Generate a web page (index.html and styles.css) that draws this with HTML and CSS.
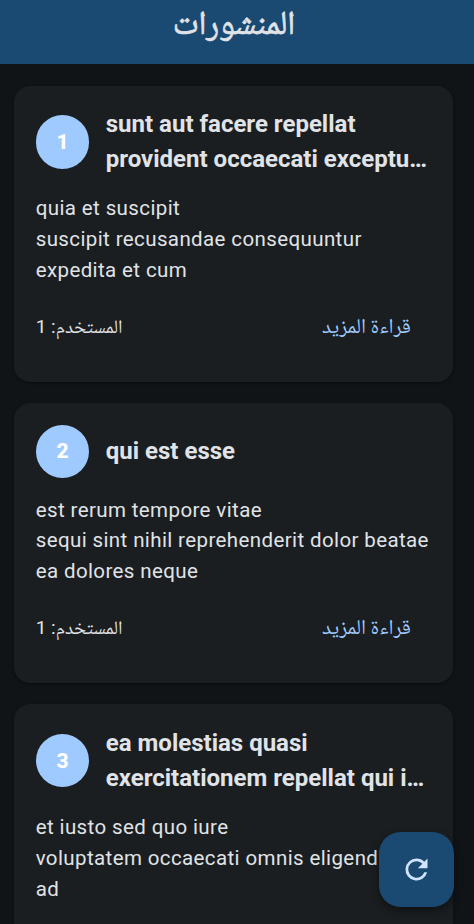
FILE: index.html
```html
<!DOCTYPE html>
<html lang="ar">
<head>
<meta charset="utf-8">
<title>المنشورات</title>
<link rel="stylesheet" href="styles.css">
</head>
<body>
<header class="app-bar"><h1 class="app-title" dir="rtl">المنشورات</h1></header>
<main class="posts">
  <article class="card">
    <div class="card-head"><span class="avatar">1</span><h2 class="title">sunt aut facere repellat<br>provident occaecati exceptu…</h2></div>
    <p class="body">quia et suscipit<br>suscipit recusandae consequuntur<br>expedita et cum</p>
    <div class="card-foot"><span class="user" dir="rtl">المستخدم: 1</span><a class="more" dir="rtl">قراءة المزيد</a></div>
  </article>
  <article class="card">
    <div class="card-head"><span class="avatar">2</span><h2 class="title">qui est esse</h2></div>
    <p class="body">est rerum tempore vitae<br>sequi sint nihil reprehenderit dolor beatae<br>ea dolores neque</p>
    <div class="card-foot"><span class="user" dir="rtl">المستخدم: 1</span><a class="more" dir="rtl">قراءة المزيد</a></div>
  </article>
  <article class="card card-last">
    <div class="card-head"><span class="avatar">3</span><h2 class="title">ea molestias quasi<br>exercitationem repellat qui i…</h2></div>
    <p class="body">et iusto sed quo iure<br>voluptatem occaecati omnis eligendi aut<br>ad</p>
  </article>
</main>
<button class="fab" aria-label="تحديث"><svg class="fab-icon" viewBox="0 0 24 24"><path d="M17.65 6.35A7.96 7.96 0 0 0 12 4a8 8 0 1 0 7.73 10h-2.08A6 6 0 1 1 12 6c1.66 0 3.14.69 4.22 1.78L13 11h7V4z"/></svg></button>
</body>
</html>
```

FILE: styles.css
```css
* { box-sizing: border-box; }
body {
  margin: 0;
  height: 924px;
  overflow: hidden;
  display: flex;
  flex-direction: column;
  background: #101417;
  color: #e0e3e7;
  font-family: Roboto, "Noto Naskh Arabic", "Noto Sans Arabic", "DejaVu Sans", sans-serif;
}
.app-bar {
  flex: none;
  height: 64px;
  background: #1a4971;
  display: flex;
  justify-content: center;
  align-items: flex-start;
}
.app-title {
  margin: 0;
  padding-right: 6px;
  font-family: "Noto Naskh Arabic", "Noto Sans Arabic", "DejaVu Sans Condensed", "DejaVu Sans", sans-serif;
  font-size: 33.3px;
  line-height: 54px;
  font-weight: 400;
  -webkit-text-stroke: .7px #e0e3e7;
}
.posts {
  flex: 1;
  min-height: 0;
  display: flex;
  flex-direction: column;
  gap: 21.4px;
  padding: 21.7px 20.6px 0 14.3px;
}
.card {
  flex: none;
  background: #1a1e20;
  border-radius: 16px;
  padding: 21.5px 21.4px 27px;
  box-shadow: 0 1px 3px rgba(0, 0, 0, .4);
  white-space: nowrap;
}
.card-last {
  flex: 1;
  min-height: 0;
  padding-bottom: 0;
  border-radius: 16px 16px 0 0;
}
.card-head { display: flex; align-items: center; gap: 16.6px; min-height: 53.5px; }
.avatar {
  flex: none;
  width: 53.5px;
  height: 53.5px;
  border-radius: 50%;
  background: #9fcaff;
  color: #fff;
  font-size: 21px;
  font-weight: 800;
  display: flex;
  align-items: center;
  justify-content: center;
}
.title { margin: 0; font-size: 24px; line-height: 34.8px; font-weight: 700; }
.body { margin: 16.5px 0 0; font-size: 20.5px; line-height: 30.8px; letter-spacing: .39px; }
.card-foot {
  height: 54px;
  margin-top: 15px;
  padding-right: 21.2px;
  display: flex;
  align-items: center;
  justify-content: space-between;
}
.user { font-size: 19px; line-height: 24px; padding-bottom: 1px; }
.more {
  font-family: "Noto Naskh Arabic", "Noto Sans Arabic", "DejaVu Sans Condensed", "DejaVu Sans", sans-serif;
  font-size: 21.1px;
  padding-top: 1px;
  color: #9fcaff;
}
.fab {
  position: fixed;
  left: 378.5px;
  top: 831.5px;
  width: 75px;
  height: 75px;
  border: 0;
  padding: 0;
  border-radius: 21.4px;
  background: #1a4971;
  box-shadow: 0 4px 10px rgba(0, 0, 0, .4);
  display: flex;
  align-items: center;
  justify-content: center;
}
.fab-icon { width: 33px; height: 33px; fill: #d1e4ff; }
```
